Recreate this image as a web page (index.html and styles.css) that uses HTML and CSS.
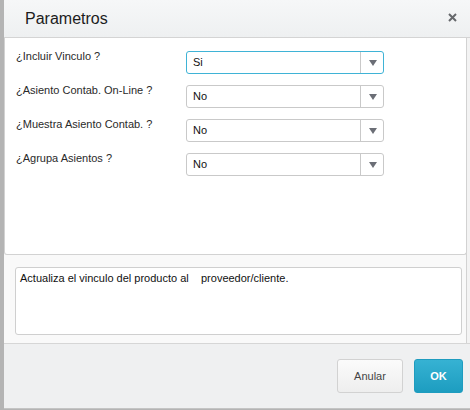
FILE: index.html
```html
<!DOCTYPE html>
<html lang="es">
<head>
  <meta charset="UTF-8" />
  <title>Parametros</title>
  <link rel="stylesheet" href="styles.css">
</head>
<body>
  <div class="dialog">
    <div class="dialog-header">
      <span class="dialog-title">Parametros</span>
      <svg class="dialog-close" width="9" height="9" viewBox="0 0 9 9">
        <path d="M1 1 L8 8 M8 1 L1 8" stroke="#66686c" stroke-width="2" />
      </svg>
    </div>

    <div class="params">
      <div class="param-row">
        <label class="param-label">¿Incluir Vinculo ?</label>
        <div class="combo combo-focus">
          <span class="combo-value">Si</span>
          <span class="combo-btn"><i class="arrow"></i></span>
        </div>
      </div>
      <div class="param-row">
        <label class="param-label">¿Asiento Contab. On-Line ?</label>
        <div class="combo">
          <span class="combo-value">No</span>
          <span class="combo-btn"><i class="arrow"></i></span>
        </div>
      </div>
      <div class="param-row">
        <label class="param-label">¿Muestra Asiento Contab. ?</label>
        <div class="combo">
          <span class="combo-value">No</span>
          <span class="combo-btn"><i class="arrow"></i></span>
        </div>
      </div>
      <div class="param-row">
        <label class="param-label">¿Agrupa Asientos ?</label>
        <div class="combo">
          <span class="combo-value">No</span>
          <span class="combo-btn"><i class="arrow"></i></span>
        </div>
      </div>
    </div>

    <div class="help-area">
      <div class="help-box">Actualiza el vinculo del producto al &nbsp;&nbsp; proveedor/cliente.</div>
    </div>

    <div class="dialog-footer">
      <button class="btn btn-cancel">Anular</button>
      <button class="btn btn-ok">OK</button>
    </div>
  </div>
</body>
</html>
```

FILE: styles.css
```css
html, body {
  margin: 0;
  padding: 0;
  height: 100%;
  overflow: hidden;
}
body {
  background: #b4b4b4;
  font-family: "Liberation Sans", Arial, sans-serif;
  font-size: 11px;
  color: #222;
}
.dialog {
  margin-left: 4px;
  width: 466px;
  height: 408px;
  background: #f9f9f9;
  border-bottom: 1px solid #c4c4c4;
  display: flex;
  flex-direction: column;
  box-shadow: inset -3px 0 0 #f3f3f3, inset -4px 0 0 #d2d2d2;
}
.dialog-header {
  height: 37px;
  border-bottom: 1px solid #d4d4d4;
  background: linear-gradient(#f6f7f8, #eef0f1);
  display: flex;
  align-items: center;
  justify-content: space-between;
  padding: 0 13px 0 21px;
}
.dialog-title {
  font-size: 16px;
  color: #1c1c1c;
  margin-top: 1px;
}
.dialog-close {
  margin-top: -3px;
}
.params {
  width: 461px;
  height: 205px;
  background: #fff;
  border: 1px solid #d2d2d2;
  border-top: none;
  border-radius: 0 0 3px 3px;
  padding: 11px 0 0 0;
}
.param-row {
  display: grid;
  grid-template-columns: 170px 198px;
  align-items: start;
  padding-left: 11px;
  margin-bottom: 9px;
}
.param-label {
  line-height: 14px;
  color: #2a2a2a;
}
.combo {
  margin-top: 2px;
  height: 21px;
  border: 1px solid #c9c9c9;
  border-radius: 3px;
  display: flex;
  background: #fff;
}
.combo-focus {
  border-color: #3fb3d6;
}
.combo-value {
  flex: 1;
  padding-left: 6px;
  line-height: 21px;
  color: #111;
}
.combo-btn {
  width: 22px;
  border-left: 1px solid #c9c9c9;
  display: flex;
  align-items: center;
  justify-content: center;
}
.arrow {
  width: 0;
  height: 0;
  border-left: 4px solid transparent;
  border-right: 4px solid transparent;
  border-top: 6px solid #6b6e76;
  margin-left: 1px;
}
.help-area {
  flex: 1;
  padding: 12px 8px 8px 11px;
}
.help-box {
  height: 62px;
  border: 1px solid #cfcfcf;
  border-radius: 3px;
  background: #fff;
  padding: 4px 4px 0 4px;
  color: #111;
  white-space: pre-wrap;
}
.dialog-footer {
  height: 65px;
  border-top: 1px solid #d6d6d6;
  background: #eff0f1;
  display: flex;
  justify-content: flex-end;
  align-items: flex-start;
  gap: 11px;
  padding: 15px 7px 0 0;
  box-sizing: border-box;
}
.btn {
  height: 34px;
  border-radius: 3px;
  font-family: "Liberation Sans", Arial, sans-serif;
  font-size: 11px;
  cursor: pointer;
}
.btn-cancel {
  width: 66px;
  border: 1px solid #d2d2d2;
  background: linear-gradient(#fbfbfb, #eeeeee);
  color: #444;
}
.btn-ok {
  width: 49px;
  border: 1px solid #1e9cbf;
  background: linear-gradient(#36b2d3, #1d9dc0);
  color: #fff;
  font-weight: bold;
}
```
